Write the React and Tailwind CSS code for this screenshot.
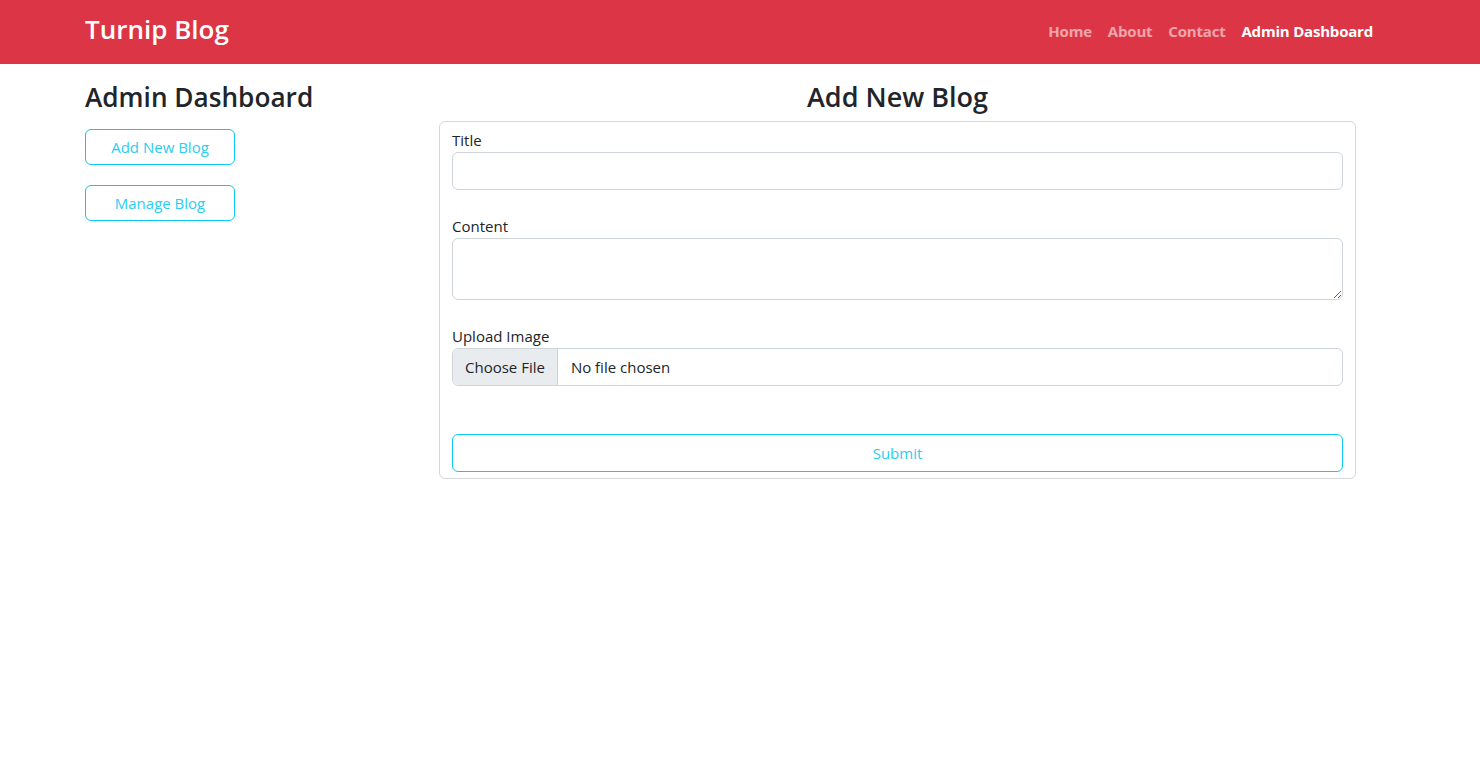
import React from "react";

const NAV = [
  { label: "Home", active: false },
  { label: "About", active: false },
  { label: "Contact", active: false },
  { label: "Admin Dashboard", active: true },
];

const Field = ({ label, children }) => (
  <div className="flex flex-col">
    <label className="h-6 leading-6 text-[15px]">{label}</label>
    {children}
  </div>
);

export default function App() {
  return (
    <div className="min-h-[781px] bg-white text-[#212529] font-['Open_Sans',sans-serif]">
      <nav className="h-16 bg-[#dc3545]">
        <div className="flex h-full items-center justify-between pl-[85px] pr-[107px]">
          <a className="text-[26px] font-semibold text-white leading-none -mt-[7px]">Turnip Blog</a>
          <ul className="flex items-center gap-4 text-[15px] font-bold tracking-[-0.2px] -mt-[2px]">
            {NAV.map((n) => (
              <li key={n.label} className={n.active ? "text-white" : "text-white/55"}>
                {n.label}
              </li>
            ))}
          </ul>
        </div>
      </nav>

      <main className="flex pl-[85px] pt-4">
        <aside className="w-[354px] shrink-0">
          <h3 className="text-[26.2px] font-semibold leading-[34px] mb-[15px]">Admin Dashboard</h3>
          <div className="flex flex-col gap-5">
            <button className="h-9 w-[150px] rounded-md border border-[#0dcaf0] text-[15px] text-[#2bcdf1]">
              Add New Blog
            </button>
            <button className="h-9 w-[150px] rounded-md border border-[#0dcaf0] text-[15px] text-[#2bcdf1]">
              Manage Blog
            </button>
          </div>
        </aside>

        <section className="w-[917px]">
          <h3 className="text-center text-[27px] font-semibold leading-[34px] mb-[7px]">Add New Blog</h3>
          <form className="flex flex-col rounded-md border border-[#d3d6da] px-3 py-[6px] text-[15px]">
            <Field label="Title">
              <input className="h-[38px] rounded-md border border-[#ced4da] px-3 outline-none" />
            </Field>
            <div className="h-6" />
            <Field label="Content">
              <textarea className="h-[62px] rounded-md border border-[#ced4da] px-3 py-1.5 outline-none" />
            </Field>
            <div className="h-6" />
            <Field label="Upload Image">
              <div className="flex h-[38px] items-stretch overflow-hidden rounded-md border border-[#ced4da]">
                <span className="flex items-center border-r border-[#ced4da] bg-[#e9ecef] px-3">Choose File</span>
                <span className="flex items-center pl-[13px]">No file chosen</span>
              </div>
            </Field>
            <div className="h-12" />
            <button
              type="button"
              className="h-[38px] rounded-md border border-[#0dcaf0] text-[15px] text-[#2bcdf1]"
            >
              Submit
            </button>
          </form>
        </section>
      </main>
    </div>
  );
}
